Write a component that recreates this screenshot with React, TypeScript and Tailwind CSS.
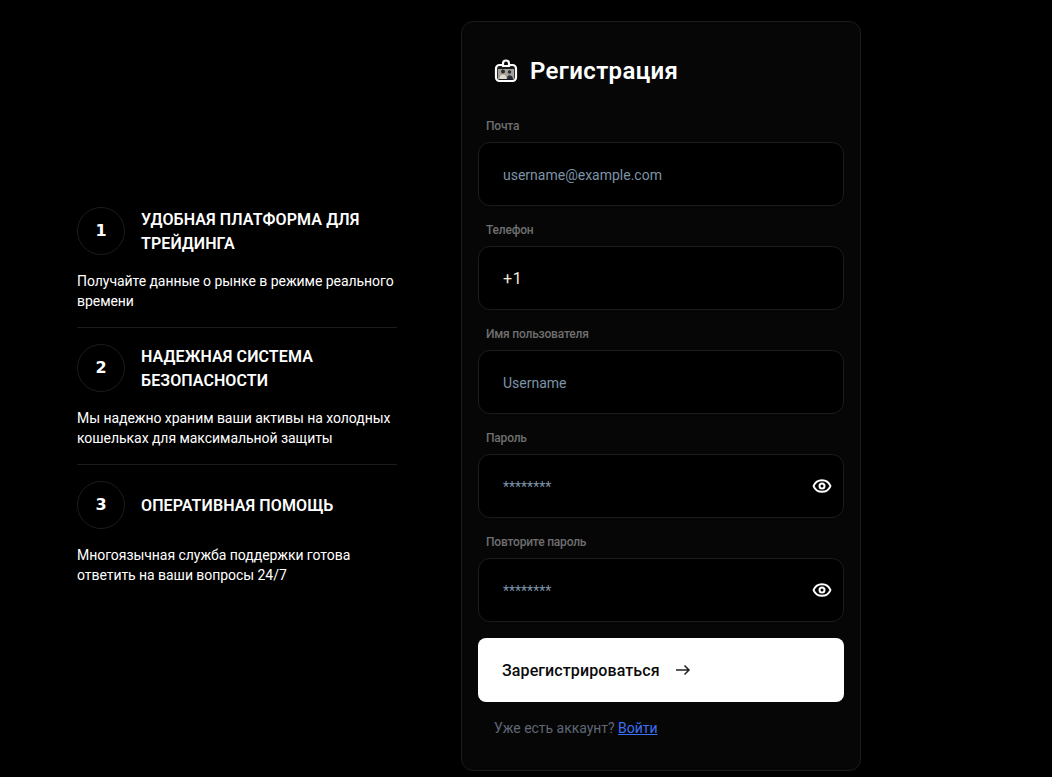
import React from "react";
import { Eye } from "lucide-react";

const font = "font-['Roboto','Noto_Sans',sans-serif]";

const steps = [
  {
    n: "1",
    title: "Удобная платформа для трейдинга",
    text: "Получайте данные о рынке в режиме реального времени",
  },
  {
    n: "2",
    title: "Надежная система безопасности",
    text: "Мы надежно храним ваши активы на холодных кошельках для максимальной защиты",
  },
  {
    n: "3",
    title: "Оперативная помощь",
    text: "Многоязычная служба поддержки готова ответить на ваши вопросы 24/7",
  },
];

const Field = ({
  label,
  placeholder,
  eye,
  light,
}: {
  label: string;
  placeholder: string;
  eye?: boolean;
  light?: boolean;
}) => (
  <div>
    <div className="pl-2 text-xs leading-[14px] font-medium tracking-[-0.2px] text-[#6f6f6f] h-[14px]">{label}</div>
    <div className="mt-[9px] h-[64px] flex items-center justify-between rounded-xl border border-[#1c1c1c] bg-black pl-6 pr-[11px]">
      <span className={light ? "pt-0.5 text-base tracking-[0.6px] text-[#f5e9d8]" : "pt-0.5 text-sm text-[#7d93a8]"}>{placeholder}</span>
      {eye && <Eye size={20} strokeWidth={2.4} className="text-white" />}
    </div>
  </div>
);

const BadgeIcon = () => (
  <svg width="24" height="24" viewBox="0 0 24 24" fill="none">
    <rect x="2" y="6" width="20" height="16" rx="3.500" fill="#1a1a1a" stroke="#fff" strokeWidth="2.200" />
    <path d="M9 7V4.500a3 3 0 0 1 6 0V7z" fill="#0a0a0a" stroke="#fff" strokeWidth="2.200" />
    <rect x="4" y="10" width="16" height="10" fill="#a5a199" />
    <circle cx="9" cy="12.500" r="2" fill="#2a2a2a" />
    <path d="M5.500 20c0-3 1.400-4.500 3.500-4.500s3.500 1.500 3.500 4.500z" fill="#e0dacd" />
    <circle cx="15.500" cy="13" r="1.700" fill="#23303a" />
    <path d="M13 20c0-2.600 1-3.800 2.500-3.800S19 17.400 19 20z" fill="#23303a" />
  </svg>
);

const Arrow = () => (
  <svg width="16" height="12" viewBox="0 0 16 12" fill="none" stroke="#222" strokeWidth="1.500" className="ml-[3px]">
    <path d="M1 6h13M9.500 1.500 14 6l-4.500 4.500" />
  </svg>
);

export default function App() {
  return (
    <div className={`${font} min-h-[777px] bg-black text-white flex`}>
      <div className="w-[461px] pl-[77px] pt-[207px]">
        <div className="w-[320px]">
          {steps.map((s, i) => (
            <div key={s.n} className={i < 2 ? "border-b border-[#1c1c1c] pb-4 mb-4" : ""}>
              <div className="flex items-center gap-4">
                <div className="w-12 h-12 shrink-0 rounded-full border border-[#1c1c1c] flex items-center justify-center font-['DejaVu_Sans',sans-serif] font-bold text-base">
                  {s.n}
                </div>
                <div className="pt-px -mb-px uppercase font-semibold text-base leading-6 tracking-[0.1px]">{s.title}</div>
              </div>
              <p className="mt-4 text-sm leading-5 tracking-[-0.05px]">{s.text}</p>
            </div>
          ))}
        </div>
      </div>
      <div className="mt-[21px] w-[400px] h-[750px] rounded-xl border border-[#1c1c1c] bg-[#060606] px-4 pt-[32px]">
        <div className="flex items-center gap-3 pl-4 h-[34px]">
          <BadgeIcon />
          <h1 className="text-2xl font-semibold leading-8 tracking-[0.35px]">Регистрация</h1>
        </div>
        <div className="mt-[31px] flex flex-col gap-[17px]">
          <Field label="Почта" placeholder="username@example.com" />
          <Field label="Телефон" placeholder="+1" light />
          <Field label="Имя пользователя" placeholder="Username" />
          <Field label="Пароль" placeholder="********" eye />
          <Field label="Повторите пароль" placeholder="********" eye />
        </div>
        <button className="mt-4 w-full h-16 rounded-lg bg-white text-[#0a0a0a] flex items-center gap-3 pl-6 text-base font-medium tracking-[0.1px]">
          <span className="pt-0.5">Зарегистрироваться</span>
          <Arrow />
        </button>
        <div className="mt-4 pl-4 text-sm tracking-[-0.03px] text-[#5f6675]">
          Уже есть аккаунт?{" "}
          <a href="#" className="text-[#3b6ff5] underline">
            Войти
          </a>
        </div>
      </div>
    </div>
  );
}
